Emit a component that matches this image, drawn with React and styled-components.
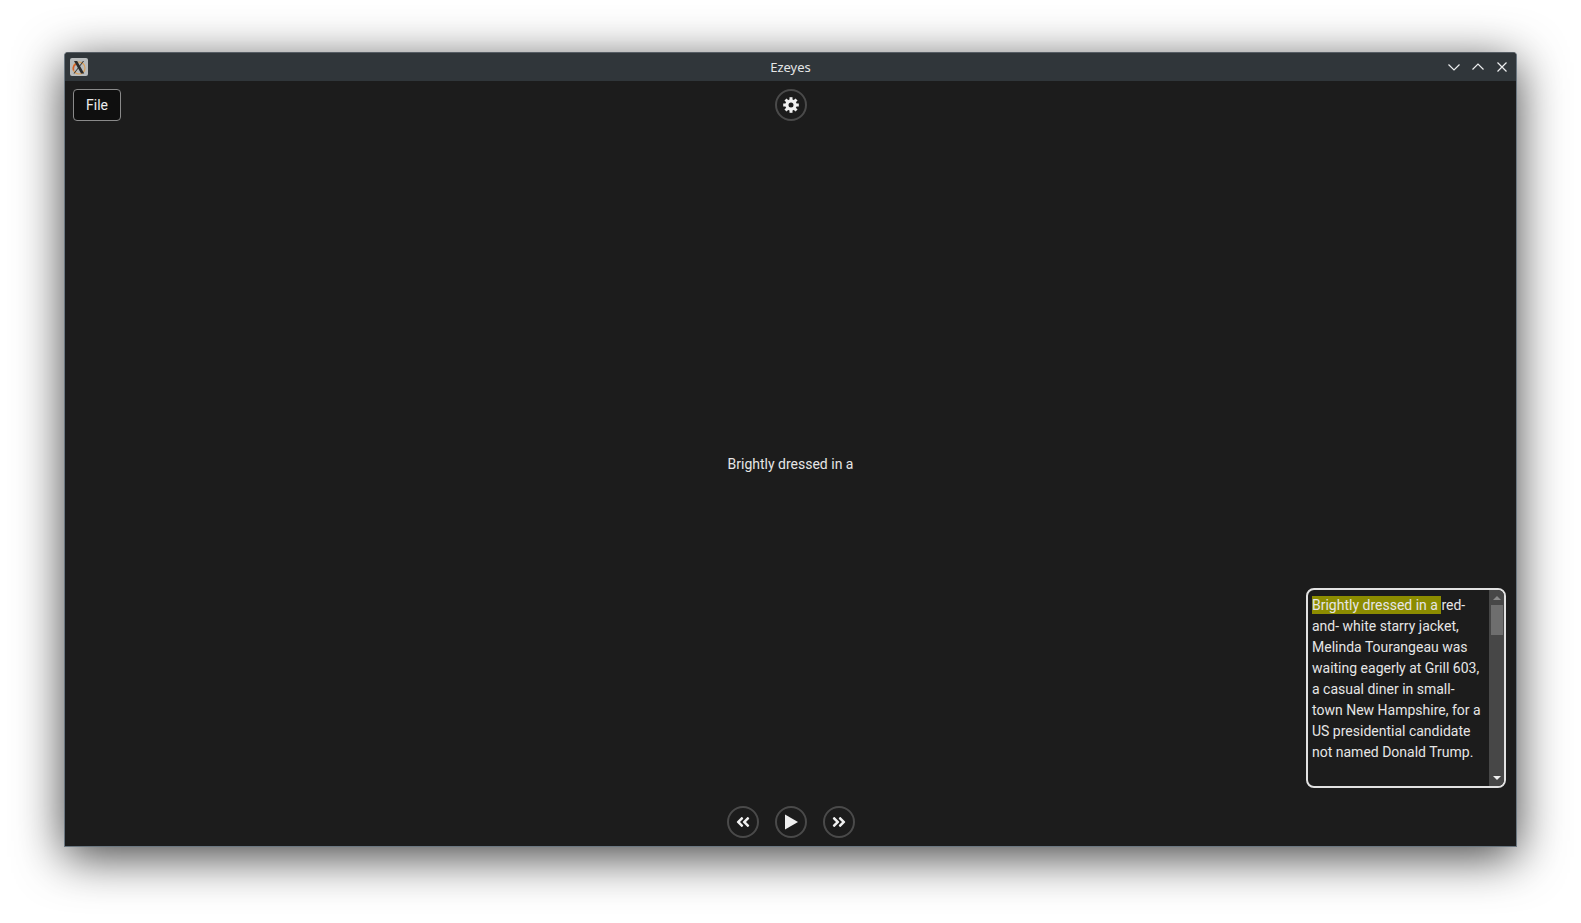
import React from "react";
import styled, { createGlobalStyle } from "styled-components";
import { FaAngleDoubleLeft, FaAngleDoubleRight } from "react-icons/fa";

const Global = createGlobalStyle`
  html, body { margin: 0; padding: 0; background: #fff; }
  body { font-family: "Roboto", "Liberation Sans", sans-serif; }
`;

const Desktop = styled.div`
  width: 1581px;
  height: 923px;
  box-sizing: border-box;
  padding: 52px 0 0 64px;
  overflow: hidden;
`;

const Window = styled.div`
  width: 1453px;
  height: 795px;
  display: flex;
  flex-direction: column;
  box-sizing: border-box;
  border-radius: 4px 4px 0 0;
  background: #1c1c1c;
  border: 1px solid #6b7781;
  border-top-color: #565d64;
  box-shadow: 0 10px 48px rgba(0, 0, 0, 0.74);
`;

const TitleBar = styled.header`
  height: 28px;
  flex: none;
  display: grid;
  grid-template-columns: 1fr auto 1fr;
  align-items: center;
  background: #30363a;
  border-radius: 3px 3px 0 0;
  padding: 0 8px 0 5px;
`;

const Title = styled.div`
  padding-left: 3px;
  font-family: "Noto Sans", sans-serif;
  font-size: 13px;
  color: #e4e6e7;
`;

const Controls = styled.div`
  display: flex;
  justify-content: flex-end;
  gap: 12px;
`;

const WinIcon = styled.svg`
  display: block;
  width: 12px;
  height: 12px;
  fill: none;
  stroke: #eceeef;
  stroke-width: 1.2;
`;

const Content = styled.main`
  flex: 1;
  min-height: 0;
  display: grid;
  grid-template-columns: 1fr auto 1fr;
  grid-template-rows: 32px 1fr 32px;
  padding: 8px;
`;

const FileButton = styled.button`
  justify-self: start;
  width: 48px;
  height: 32px;
  padding: 0;
  background: #0f0f0f;
  color: #ececec;
  border: 1px solid #8a8a8a;
  border-radius: 4px;
  font: 14px "Roboto", sans-serif;
`;

const RoundButton = styled.button`
  width: 32px;
  height: 32px;
  padding: 0;
  display: flex;
  align-items: center;
  justify-content: center;
  justify-self: center;
  border-radius: 50%;
  background: #1c1c1c;
  border: 2px solid #4a4a4a;
  color: #f0f0f0;
  font-size: 16px;
`;

const Caption = styled.div`
  grid-column: 1 / 4;
  grid-row: 2;
  align-self: center;
  justify-self: center;
  font-size: 14px;
  color: #e6e6e6;
`;

const Transcript = styled.section`
  grid-column: 3;
  grid-row: 2;
  align-self: end;
  justify-self: end;
  width: 200px;
  height: 200px;
  margin: 0 2px 18px 0;
  box-sizing: border-box;
  display: flex;
  background: #1c1c1c;
  border: 2px solid #e2e2e2;
  border-radius: 8px;
  overflow: hidden;
`;

const TranscriptText = styled.p`
  flex: 1;
  min-width: 0;
  margin: 0;
  padding: 5px 4px 0 4px;
  font-size: 14px;
  line-height: 21px;
  color: #e6e6e6;
`;

const Highlight = styled.span`
  background: #8c8c00;
  padding: 1px 0;
`;

const Scrollbar = styled.div`
  width: 15px;
  flex: none;
  display: flex;
  flex-direction: column;
  align-items: center;
  background: #474747;
`;

const Arrow = styled.div`
  width: 0;
  height: 0;
  margin: ${(p) => (p.$down ? "auto 0 6px" : "6px 0 0")};
  border-left: 4px solid transparent;
  border-right: 4px solid transparent;
  ${(p) =>
    p.$down
      ? "border-top: 4px solid #f0f0f0;"
      : "border-bottom: 4px solid #8a8a8a;"}
`;

const Thumb = styled.div`
  width: 12px;
  height: 30px;
  margin-top: 5px;
  background: #6e6e6e;
`;

const Transport = styled.div`
  grid-column: 2;
  grid-row: 3;
  display: flex;
  gap: 16px;
`;

const XLogo = () => (
  <svg width="18" height="18" viewBox="0 0 18 18" style={{ display: "block" }}>
    <rect width="18" height="18" rx="2" fill="#b9bcbd" />
    <circle cx="9" cy="10" r="6" fill="none" stroke="#d9a05c" strokeWidth="1.2" />
    <path d="M3.5 12.5C3 9 4.5 6.5 6.5 6" fill="none" stroke="#d4602a" strokeWidth="1.6" />
    <path d="M4 3h3.2l7 12.5h-3.2z" fill="#2b2b2b" />
    <path d="M14 3l-9.5 12.5h-1L13 3z" fill="#2b2b2b" />
  </svg>
);

const Gear = () => (
  <svg width="16" height="16" viewBox="0 0 16 16" style={{ display: "block" }}>
    <circle cx="8" cy="8" r="4.1" fill="none" stroke="#f0f0f0" strokeWidth="3.2" />
    {[0, 45, 90, 135, 180, 225, 270, 315].map((a) => (
      <rect key={a} x="6.5" y="0.2" width="3" height="4" fill="#f0f0f0" transform={`rotate(${a} 8 8)`} />
    ))}
  </svg>
);

export default function App() {
  return (
    <Desktop>
      <Global />
      <Window>
        <TitleBar>
          <XLogo />
          <Title>Ezeyes</Title>
          <Controls>
            <WinIcon viewBox="0 0 12 12"><path d="M0.5 3.5l5.5 5.5 5.5-5.5" /></WinIcon>
            <WinIcon viewBox="0 0 12 12"><path d="M0.5 8.5l5.5-5.5 5.5 5.5" /></WinIcon>
            <WinIcon viewBox="0 0 12 12"><path d="M1.5 1.5l9 9M10.5 1.5l-9 9" /></WinIcon>
          </Controls>
        </TitleBar>
        <Content>
          <FileButton>File</FileButton>
          <RoundButton><Gear /></RoundButton>
          <Caption>Brightly dressed in a</Caption>
          <Transcript>
            <TranscriptText>
              <Highlight>Brightly dressed in a </Highlight>red- and- white starry jacket, Melinda Tourangeau was waiting eagerly at Grill 603, a casual diner in small- town New Hampshire, for a US presidential candidate not named Donald Trump.
            </TranscriptText>
            <Scrollbar>
              <Arrow />
              <Thumb />
              <Arrow $down />
            </Scrollbar>
          </Transcript>
          <Transport>
            <RoundButton><FaAngleDoubleLeft /></RoundButton>
            <RoundButton>
              <svg width="16" height="16" viewBox="0 0 16 16" style={{ display: "block" }}>
                <path d="M2 0.5L15 8L2 15.5z" fill="#f0f0f0" />
              </svg>
            </RoundButton>
            <RoundButton><FaAngleDoubleRight /></RoundButton>
          </Transport>
        </Content>
      </Window>
    </Desktop>
  );
}
